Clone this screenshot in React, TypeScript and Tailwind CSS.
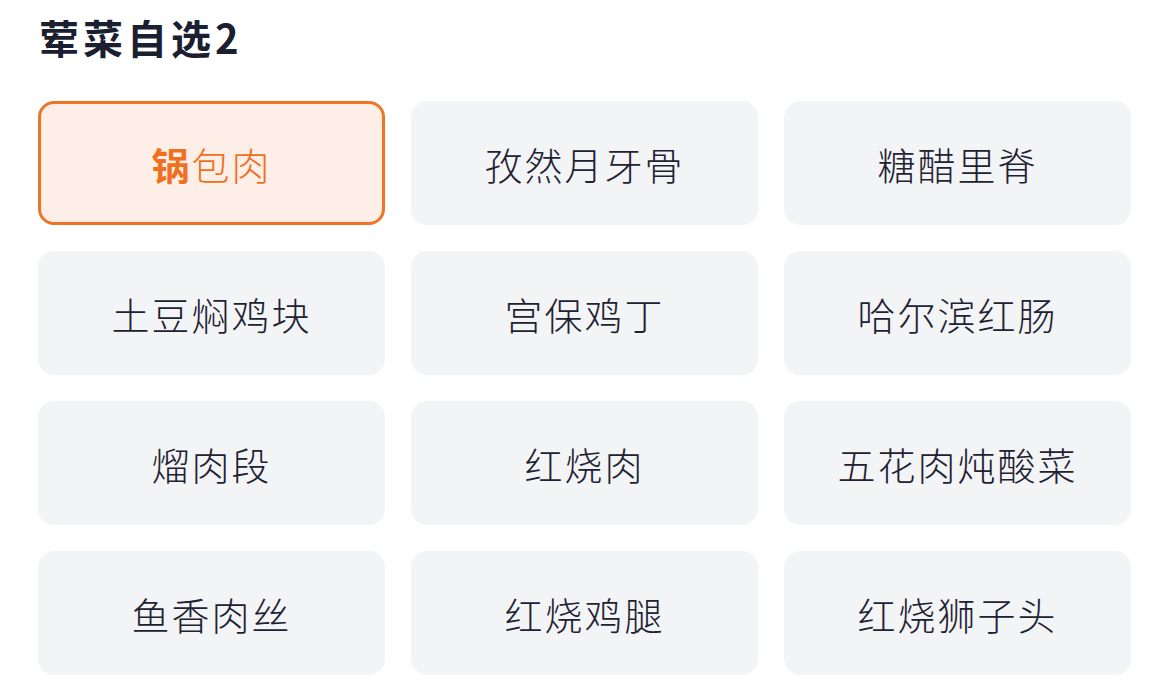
const dishes = [
  '锅包肉',
  '孜然月牙骨',
  '糖醋里脊',
  '土豆焖鸡块',
  '宫保鸡丁',
  '哈尔滨红肠',
  '熘肉段',
  '红烧肉',
  '五花肉炖酸菜',
  '鱼香肉丝',
  '红烧鸡腿',
  '红烧狮子头',
]

const font = { fontFamily: '"Noto Sans CJK SC", "Noto Sans", sans-serif' }

export default function App() {
  const selected = '锅包肉'
  const highlight = '锅'

  return (
    <div className="w-[1169px] h-[695px] bg-white overflow-hidden px-[38px]" style={font}>
      <h1 className="pt-[11px] pl-[1px] text-[40px] leading-[52px] font-bold tracking-[4px] text-[#1b2030]">荤菜自选2</h1>

      <div className="mt-[38px] grid grid-cols-3 gap-[26px]">
        {dishes.map((name) => {
          const isSelected = name === selected
          return (
            <div
              key={name}
              className={`h-[124px] rounded-[16px] flex items-center justify-center text-[38px] font-light tracking-[2px] ${
                isSelected
                  ? 'bg-[#fdefe7] border-[3px] border-[#ee7426] text-[#ef7020]'
                  : 'bg-[#f3f4f6] text-[#1e2232]'
              }`}
            >
              {isSelected && name.startsWith(highlight) ? (
                <span>
                  <span className="font-bold">{highlight}</span>
                  {name.slice(highlight.length)}
                </span>
              ) : (
                name
              )}
            </div>
          )
        })}
      </div>
    </div>
  )
}
